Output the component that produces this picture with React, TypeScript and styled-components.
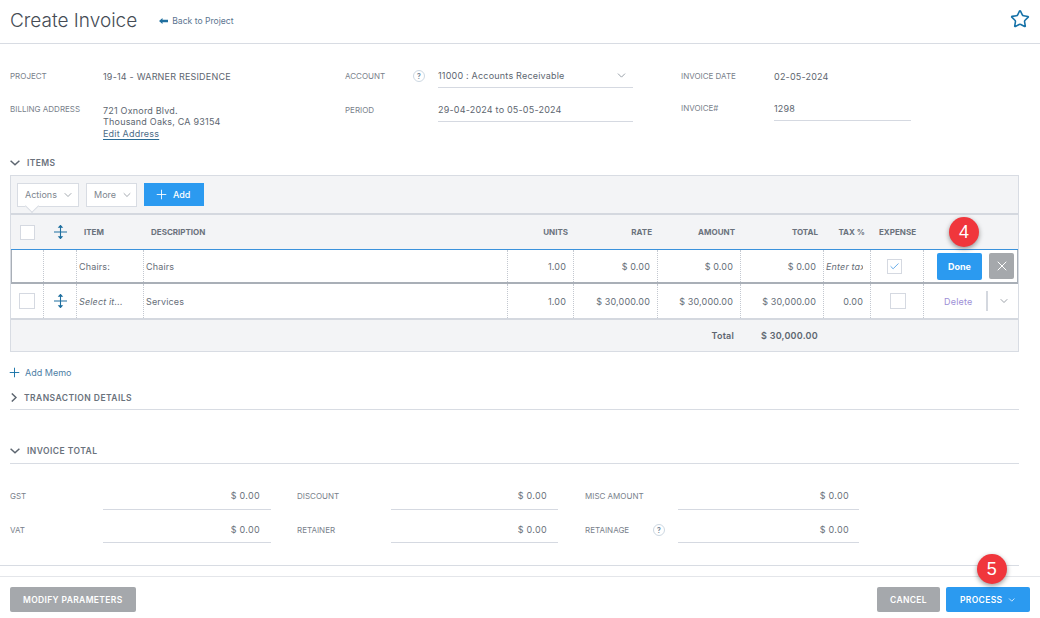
import React from "react";
import styled, { createGlobalStyle } from "styled-components";
import { Check, ChevronDown, Plus, Star, X } from "lucide-react";

const GlobalStyle = createGlobalStyle`
  html, body {
    margin: 0;
    padding: 0;
    background: #fff;
    font-family: Inter, "Liberation Sans", sans-serif;
    color: #5d6670;
  }
  * { box-sizing: border-box; }
`;

const COLS = "33px 33px 67px 364px 66px 84px 83px 83px 47px 53px 1fr";

const rows = [
  {
    item: "Select it...",
    desc: "Services",
    units: "1.00",
    rate: "$ 30,000.00",
    amount: "$ 30,000.00",
    total: "$ 30,000.00",
    tax: "0.00",
  },
];

const totals = [
  [
    { label: "GST", value: "$ 0.00", labelW: 93, amountW: 168, pad: 11, width: 287 },
    { label: "DISCOUNT", value: "$ 0.00", labelW: 94, amountW: 167, pad: 11, width: 288 },
    { label: "MISC AMOUNT", value: "$ 0.00", labelW: 93, amountW: 181, pad: 10, width: 274 },
  ],
  [
    { label: "VAT", value: "$ 0.00", labelW: 93, amountW: 168, pad: 11, width: 287 },
    { label: "RETAINER", value: "$ 0.00", labelW: 94, amountW: 167, pad: 11, width: 288 },
    { label: "RETAINAGE", value: "$ 0.00", labelW: 93, amountW: 181, pad: 10, width: 274, help: true },
  ],
];

function MoveIcon() {
  return (
    <svg width="13" height="14" viewBox="0 0 13 14" fill="none" stroke="#1f6f9f" strokeWidth="1.1">
      <path d="M0 7h13M6.5 1v12" />
      <path d="M5 2.2 6.5 0.5 8 2.2zM5 11.8 6.5 13.5 8 11.8z" fill="#1f6f9f" />
    </svg>
  );
}

function BackArrow() {
  return (
    <svg width="9" height="6" viewBox="0 0 9 6" fill="#1f6f9f">
      <path d="M0 3 3.5 0v1.8H9v2.4H3.5V6z" />
    </svg>
  );
}

function OpenChevron() {
  return (
    <svg width="10" height="6" viewBox="0 0 10 6" fill="none" stroke="#5d6670" strokeWidth="1.5">
      <path d="M0.6 0.8 5 4.8 9.4 0.8" />
    </svg>
  );
}

function ClosedChevron() {
  return (
    <svg width="6" height="9" viewBox="0 0 6 9" fill="none" stroke="#5d6670" strokeWidth="1.5" style={{ marginLeft: 1 }}>
      <path d="M0.8 0.5 5 4.5 0.8 8.5" />
    </svg>
  );
}

export default function App() {
  return (
    <Page>
      <GlobalStyle />
      <Header>
        <Title>Create Invoice</Title>
        <BackLink>
          <BackArrow />
          Back to Project
        </BackLink>
        <StarSlot>
          <Star size={20} strokeWidth={1.9} color="#1672a8" />
        </StarSlot>
      </Header>

      <Fields>
        <FieldColumn $width={335}>
          <FieldRow $height={34}>
            <Label $width={93}>PROJECT</Label>
            <Value>19-14 - WARNER RESIDENCE</Value>
          </FieldRow>
          <FieldRow $height={44} $top>
            <Label $width={93}>BILLING ADDRESS</Label>
            <Address>
              721 Oxnord Blvd.
              <br />
              Thousand Oaks, CA 93154
              <br />
              <EditLink>Edit Address</EditLink>
            </Address>
          </FieldRow>
        </FieldColumn>
        <FieldColumn $width={336}>
          <FieldRow $height={34}>
            <Label $width={68}>ACCOUNT</Label>
            <Help />
            <Underlined $width={195}>
              <Value>11000 : Accounts Receivable</Value>
              <ChevronDown size={13} strokeWidth={1.6} color="#8a929b" />
            </Underlined>
          </FieldRow>
          <FieldRow $height={34}>
            <Label $width={93}>PERIOD</Label>
            <Underlined $width={195}>
              <Value>29-04-2024 to 05-05-2024</Value>
            </Underlined>
          </FieldRow>
        </FieldColumn>
        <FieldColumn $width={240}>
          <FieldRow $height={34}>
            <Label $width={93}>INVOICE DATE</Label>
            <Value>02-05-2024</Value>
          </FieldRow>
          <FieldRow $height={34} $nudge={-2}>
            <Label $width={93}>INVOICE#</Label>
            <Underlined $width={137} $tall>
              <Value>1298</Value>
            </Underlined>
          </FieldRow>
        </FieldColumn>
      </Fields>

      <SectionHead>
        <OpenChevron />
        ITEMS
      </SectionHead>

      <Panel>
        <Toolbar>
          <ActionsButton>
            Actions <ChevronDown size={12} strokeWidth={1.4} />
          </ActionsButton>
          <ToolButton>
            More <ChevronDown size={12} strokeWidth={1.4} />
          </ToolButton>
          <AddButton>
            <Plus size={15} strokeWidth={1.4} /> Add
          </AddButton>
        </Toolbar>

        <HeadRow>
          <Center>
            <HeadBox />
          </Center>
          <Center>
            <MoveIcon />
          </Center>
          <HeadCell $pad={7}>ITEM</HeadCell>
          <HeadCell $pad={7}>DESCRIPTION</HeadCell>
          <HeadCell $right>UNITS</HeadCell>
          <HeadCell $right>RATE</HeadCell>
          <HeadCell $right>AMOUNT</HeadCell>
          <HeadCell $right>TOTAL</HeadCell>
          <HeadCell $right>TAX %</HeadCell>
          <HeadCell $center>EXPENSE</HeadCell>
          <span />
          <Badge $right={39} $top={2}>4</Badge>
        </HeadRow>

        <EditRow>
          <Cell />
          <Cell />
          <Cell>Chairs:</Cell>
          <Cell>Chairs</Cell>
          <Cell $right>1.00</Cell>
          <Cell $right>$ 0.00</Cell>
          <Cell $right>$ 0.00</Cell>
          <Cell $right>$ 0.00</Cell>
          <Cell $italic>
            <TaxClip>Enter tax %</TaxClip>
          </Cell>
          <Cell $center>
            <Box $small>
              <Check size={11} strokeWidth={1.6} color="#2f8fe0" />
            </Box>
          </Cell>
          <ActionCell>
            <DoneButton>Done</DoneButton>
            <CloseButton>
              <X size={16} strokeWidth={1.5} />
            </CloseButton>
          </ActionCell>
        </EditRow>

        {rows.map((r) => (
          <DataRow key={r.desc}>
            <Cell $center>
              <Box />
            </Cell>
            <Cell $center>
              <MoveIcon />
            </Cell>
            <Cell $italic>{r.item}</Cell>
            <Cell>{r.desc}</Cell>
            <Cell $right>{r.units}</Cell>
            <Cell $right>{r.rate}</Cell>
            <Cell $right>{r.amount}</Cell>
            <Cell $right>{r.total}</Cell>
            <Cell $right>{r.tax}</Cell>
            <Cell $center>
              <Box $shift={2} />
            </Cell>
            <ActionCell>
              <DeleteLink>Delete</DeleteLink>
              <Divider />
              <ChevronDown size={12} strokeWidth={1.5} color="#7b838c" />
            </ActionCell>
          </DataRow>
        ))}

        <TotalRow>
          <TotalLabel>Total</TotalLabel>
          <TotalValue>$ 30,000.00</TotalValue>
        </TotalRow>
      </Panel>

      <AddMemo>
        <Plus size={15} strokeWidth={1.5} color="#1672a8" />
        Add Memo
      </AddMemo>

      <CollapsedHead>
        <ClosedChevron />
        TRANSACTION DETAILS
      </CollapsedHead>

      <TotalHead>
        <OpenChevron />
        INVOICE TOTAL
      </TotalHead>

      <TotalsGrid>
        {totals.map((row) => (
          <TotalsRow key={row[0].label}>
            {row.map((f) => (
              <TotalField key={f.label} $width={f.width}>
                <TotalFieldLabel $width={f.labelW}>
                  {f.label}
                  {f.help && <Help $plain />}
                </TotalFieldLabel>
                <Amount $width={f.amountW} $pad={f.pad}>
                  {f.value}
                </Amount>
              </TotalField>
            ))}
          </TotalsRow>
        ))}
      </TotalsGrid>

      <Footer>
        <GreyButton>MODIFY PARAMETERS</GreyButton>
        <FooterRight>
          <GreyButton>CANCEL</GreyButton>
          <ProcessButton>
            PROCESS <ChevronDown size={12} strokeWidth={1.9} />
            <Badge $right={23} $top={-33}>5</Badge>
          </ProcessButton>
        </FooterRight>
      </Footer>
    </Page>
  );
}

const Page = styled.div`
  position: relative;
  width: 1040px;
  height: 618px;
  overflow: hidden;
  display: flex;
  flex-direction: column;
  background: #fff;
`;

const Header = styled.header`
  height: 44px;
  flex: none;
  display: flex;
  align-items: center;
  padding: 0 10px 3px 10px;
  border-bottom: 1px solid #d8dce3;
`;

const Title = styled.h1`
  margin: 0;
  font-size: 19px;
  font-weight: 300;
  color: #454c55;
`;

const BackLink = styled.a`
  margin-left: 22px;
  display: flex;
  align-items: center;
  gap: 4px;
  font-size: 8.6px;
  color: #5c7590;
  padding-top: 2px;
`;

const StarSlot = styled.div`
  margin: -3px 0 0 auto;
  display: flex;
`;

const Fields = styled.section`
  display: flex;
  padding: 15px 0 0 10px;
  height: 110px;
  flex: none;
`;

const FieldColumn = styled.div<{ $width: number }>`
  width: ${(p) => p.$width}px;
  flex: none;
`;

const FieldRow = styled.div<{ $height: number; $top?: boolean; $nudge?: number }>`
  display: flex;
  align-items: ${(p) => (p.$top ? "flex-start" : "center")};
  height: ${(p) => p.$height}px;
  padding-top: ${(p) => (p.$top ? "11px" : "0")};
  margin-top: ${(p) => p.$nudge ?? 0}px;
`;

const Label = styled.span<{ $width: number }>`
  width: ${(p) => p.$width}px;
  flex: none;
  font-size: 8px;
  color: #79818b;
`;

const Value = styled.span`
  font-size: 9px;
  letter-spacing: 0.2px;
  color: #5d6670;
`;

const Address = styled.div`
  font-size: 9px;
  letter-spacing: 0.2px;
  line-height: 11.5px;
  color: #5d6670;
  margin-top: 0.5px;
`;

const EditLink = styled.a`
  color: #4e6d87;
  text-decoration: underline;
  text-decoration-color: #2a6c96;
  text-underline-offset: 2px;
`;

const Help = styled.span.attrs({ children: "?" })<{ $plain?: boolean }>`
  width: 12px;
  height: 12px;
  flex: none;
  border: 1px solid #cdd8e2;
  border-radius: 50%;
  display: flex;
  align-items: center;
  justify-content: center;
  font-size: 7px;
  font-weight: 600;
  color: #6d7f92;
  margin-right: ${(p) => (p.$plain ? "0" : "13px")};
`;

const Underlined = styled.div<{ $width: number; $tall?: boolean }>`
  width: ${(p) => p.$width}px;
  height: ${(p) => (p.$tall ? 30 : 29)}px;
  margin-bottom: ${(p) => (p.$tall ? 4 : 5)}px;
  display: flex;
  align-items: center;
  justify-content: space-between;
  padding: 5px 5px 0 0;
  border-bottom: 1px solid #d5d9e1;
`;

const SectionHead = styled.div`
  height: 15px;
  flex: none;
  display: flex;
  align-items: center;
  gap: 7px;
  padding-left: 10px;
  margin-top: 1px;
  font-size: 8.5px;
  font-weight: 600;
  letter-spacing: 0.4px;
  color: #6a727c;
`;

const Panel = styled.section`
  margin: 5px 21px 0 10px;
  flex: none;
  border: 1px solid #d8dce3;
  background: #f3f4f6;
`;

const Toolbar = styled.div`
  height: 39px;
  display: flex;
  align-items: center;
  gap: 7px;
  padding: 0 6px;
  border-bottom: 2px solid #d4d8df;
`;

const ToolButton = styled.button`
  height: 24px;
  width: 51px;
  padding: 0 3px 0 7px;
  display: flex;
  align-items: center;
  gap: 5px;
  font: 400 9px Inter, sans-serif;
  color: #7d858e;
  background: #fff;
  border: 1px solid #d8dce3;
`;

const ActionsButton = styled(ToolButton)`
  position: relative;
  width: 62px;
  &::after {
    content: "";
    position: absolute;
    left: 9px;
    bottom: -5px;
    width: 9px;
    height: 9px;
    background: #fff;
    border-right: 1px solid #d8dce3;
    border-bottom: 1px solid #d8dce3;
    transform: rotate(45deg);
  }
`;

const AddButton = styled.button`
  height: 23px;
  width: 60px;
  display: flex;
  align-items: center;
  gap: 4px;
  padding: 0 0 0 10px;
  border: none;
  font: 500 9px Inter, sans-serif;
  color: #fff;
  background: #2b9af0;
`;

const HeadRow = styled.div`
  position: relative;
  height: 34px;
  display: grid;
  grid-template-columns: ${COLS};
  align-items: center;
`;

const Center = styled.div`
  display: flex;
  justify-content: center;
`;

const HeadCell = styled.div<{ $right?: boolean; $center?: boolean; $pad?: number }>`
  font-size: 8px;
  font-weight: 700;
  color: #6a727c;
  text-align: ${(p) => (p.$right ? "right" : p.$center ? "center" : "left")};
  padding-left: ${(p) => p.$pad ?? 0}px;
  padding-right: ${(p) => (p.$right ? "6px" : "0")};
  padding-bottom: 1px;
`;

const EditRow = styled.div`
  height: 35px;
  display: grid;
  grid-template-columns: ${COLS};
  background: #fff;
  border-top: 1px solid #3a92dc;
  border-bottom: 2px solid #a9afb7;
  box-shadow: inset 1px 0 #a9afb7, inset -1px 0 #a9afb7;
`;

const DataRow = styled.div`
  height: 36px;
  display: grid;
  grid-template-columns: ${COLS};
  background: #fff;
  border-bottom: 2px solid #d4d8df;
`;

const Cell = styled.div<{ $right?: boolean; $center?: boolean; $italic?: boolean }>`
  display: flex;
  align-items: center;
  justify-content: ${(p) => (p.$right ? "flex-end" : p.$center ? "center" : "flex-start")};
  padding: 0 ${(p) => (p.$center ? 0 : "7px")} 0 ${(p) => (p.$center ? 0 : "2px")};
  font-size: 9px;
  letter-spacing: 0.15px;
  font-style: ${(p) => (p.$italic ? "italic" : "normal")};
  color: #666e78;
  border-right: 1px dotted #c3c8d0;
  overflow: hidden;
  white-space: nowrap;
`;

const TaxClip = styled.span`
  display: block;
  width: 37px;
  overflow: hidden;
`;

const ActionCell = styled.div`
  display: flex;
  align-items: center;
  padding-left: 13px;
`;

const Box = styled.div<{ $small?: boolean; $shift?: number }>`
  width: ${(p) => (p.$small ? 15 : 16)}px;
  height: ${(p) => (p.$small ? 15 : 16)}px;
  margin-right: ${(p) => (p.$small ? 5 : 0)}px;
  margin-left: ${(p) => p.$shift ?? 0}px;
  display: flex;
  align-items: center;
  justify-content: center;
  background: #fff;
  border: 1px solid #d5d9e1;
`;

const HeadBox = styled(Box)`
  width: 15px;
  height: 15px;
`;

const DoneButton = styled.button`
  width: 45px;
  height: 27px;
  border: none;
  border-radius: 2px;
  background: #2b9af0;
  color: #fff;
  font: 700 9px Inter, sans-serif;
`;

const CloseButton = styled.button`
  width: 25px;
  height: 26px;
  margin-left: 7px;
  padding: 0;
  border: none;
  border-radius: 2px;
  display: flex;
  align-items: center;
  justify-content: center;
  background: #a5a8ac;
  color: #fff;
`;

const DeleteLink = styled.a`
  font-size: 9px;
  letter-spacing: 0.2px;
  color: #9d8fd6;
  margin-left: 7px;
`;

const Divider = styled.span`
  width: 2px;
  height: 20px;
  margin: 0 10px 0 14px;
  background: #d4d8df;
`;

const TotalRow = styled.div`
  height: 31px;
  display: flex;
  align-items: center;
  justify-content: flex-end;
  padding-right: 200px;
  font-size: 9px;
  font-weight: 600;
  color: #5d6670;
`;

const TotalLabel = styled.span`
  margin-right: 27px;
  letter-spacing: 0.2px;
`;

const TotalValue = styled.span`
  letter-spacing: 0.25px;
`;

const Badge = styled.span<{ $right: number; $top: number }>`
  position: absolute;
  right: ${(p) => p.$right}px;
  top: ${(p) => p.$top}px;
  width: 30px;
  height: 30px;
  border-radius: 50%;
  display: flex;
  align-items: center;
  justify-content: center;
  background: #f0363c;
  color: #fff;
  font: 400 18px "Liberation Sans", Arial, sans-serif;
  box-shadow: 0 2px 5px rgba(0, 0, 0, 0.4);
`;

const AddMemo = styled.a`
  margin: 14px 0 0 7px;
  height: 12px;
  flex: none;
  display: flex;
  align-items: center;
  gap: 3px;
  font-size: 9px;
  color: #4d7ea5;
`;

const CollapsedHead = styled.div`
  margin: 12px 21px 0 10px;
  height: 20px;
  flex: none;
  display: flex;
  align-items: center;
  gap: 7px;
  padding-bottom: 4px;
  font-size: 8.5px;
  font-weight: 600;
  letter-spacing: 0.45px;
  color: #6a727c;
  border-bottom: 1px solid #d8dce3;
`;

const TotalHead = styled(CollapsedHead)`
  margin: 32px 21px 0 10px;
  height: 22px;
  padding-bottom: 4px;
`;

const TotalsGrid = styled.div`
  padding: 16px 0 0 10px;
  height: 102px;
  flex: none;
  margin-right: 21px;
  display: flex;
  flex-direction: column;
  gap: 4px;
  border-bottom: 1px solid #d8dce3;
`;

const TotalField = styled.div<{ $width: number }>`
  display: flex;
  width: ${(p) => p.$width}px;
  flex: none;
`;

const TotalFieldLabel = styled.span<{ $width: number }>`
  width: ${(p) => p.$width}px;
  flex: none;
  display: flex;
  align-items: center;
  justify-content: space-between;
  padding: 3px 13px 0 0;
  font-size: 8px;
  color: #79818b;
`;

const Amount = styled.div<{ $width: number; $pad: number }>`
  width: ${(p) => p.$width}px;
  flex: none;
  display: flex;
  align-items: center;
  justify-content: flex-end;
  padding: 3px ${(p) => p.$pad}px 0 0;
  font-size: 9px;
  letter-spacing: 0.3px;
  color: #6a727c;
  border-bottom: 1px solid #d5d9e1;
`;

const TotalsRow = styled.div`
  display: flex;
  height: 30px;
  &:first-child ${TotalFieldLabel}, &:first-child ${Amount} {
    padding-top: 2px;
  }
  &:last-child {
    height: 29px;
  }
`;

const Footer = styled.footer`
  position: absolute;
  left: 0;
  right: 0;
  bottom: 0;
  height: 42px;
  display: flex;
  align-items: center;
  justify-content: space-between;
  padding: 4px 10px 0;
  background: #fff;
  border-top: 1px solid #e4e6ea;
`;

const FooterRight = styled.div`
  display: flex;
  gap: 6px;
`;

const GreyButton = styled.button`
  height: 25px;
  padding: 0 13px;
  border: none;
  border-radius: 2px;
  background: #a5a8ac;
  color: #fff;
  font: 600 8.5px Inter, sans-serif;
  letter-spacing: 0.35px;
`;

const ProcessButton = styled(GreyButton)`
  position: relative;
  width: 84px;
  padding-left: 14px;
  display: flex;
  align-items: center;
  gap: 5px;
  background: #2b9af0;
`;
